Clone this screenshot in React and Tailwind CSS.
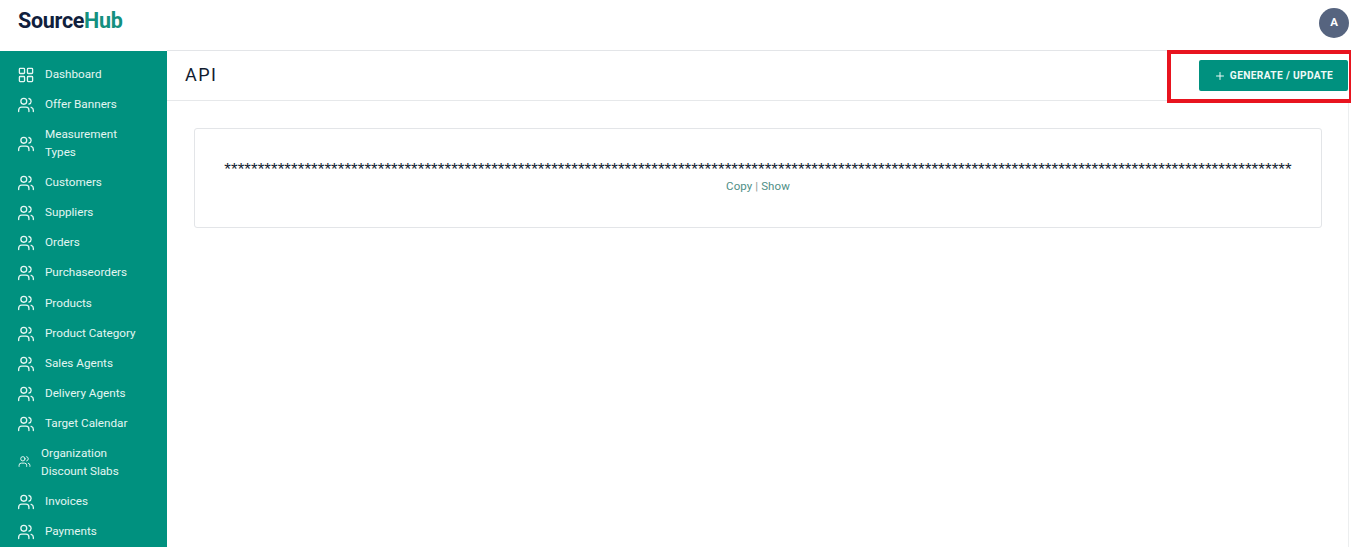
import React from "react";
import { LayoutGrid, Users, Plus } from "lucide-react";

const items = [
  ["Dashboard", "grid"],
  ["Offer Banners"],
  ["Measurement Types", "tall"],
  ["Customers"],
  ["Suppliers"],
  ["Orders"],
  ["Purchaseorders"],
  ["Products"],
  ["Product Category"],
  ["Sales Agents"],
  ["Delivery Agents"],
  ["Target Calendar"],
  ["Organization Discount Slabs", "small"],
  ["Invoices"],
  ["Payments"],
];

function NavRow({ label, kind }) {
  if (kind === "small") {
    return (
      <div className="flex h-[47.3px] items-center pb-[2px] pl-[18px] pr-4">
        <Users className="h-[13px] w-[13px] shrink-0 text-[#e6f7f3]" strokeWidth={1.8} />
        <span className="ml-[10px] w-[110px] text-[11.7px] leading-[18px] text-[#e3f6f2]">{label}</span>
      </div>
    );
  }
  const Icon = kind === "grid" ? LayoutGrid : Users;
  return (
    <div className={`flex items-center pl-[18px] pr-4 ${kind === "tall" ? "h-[47.3px]" : "h-[30.2px]"}`}>
      <Icon className="h-4 w-4 shrink-0 scale-110 text-[#e6f7f3]" strokeWidth={1.8} />
      <span className="ml-[11px] w-[100px] text-[11.7px] leading-[17.5px] text-[#e3f6f2]">{label}</span>
    </div>
  );
}

export default function App() {
  return (
    <div className="relative h-[547px] w-[1351px] overflow-hidden bg-white font-['Roboto',sans-serif]">
      <header className="flex h-[51px] items-start justify-between">
        <div className="pl-[18px] pt-[9px] text-[21.5px] font-bold leading-6 tracking-[-0.3px] text-[#10203c]">
          Source<span className="text-[#14907f]">Hub</span>
        </div>
        <div className="mr-[2px] mt-[8px] flex h-[30px] w-[30px] items-center justify-center rounded-full bg-[#56647f] text-[11.5px] font-bold text-white">
          A
        </div>
      </header>
      <div className="flex h-[496px]">
        <aside className="w-[167px] shrink-0 bg-[#00917f] pt-[8.8px]">
          {items.map(([label, kind]) => (
            <NavRow key={label} label={label} kind={kind} />
          ))}
        </aside>
        <main className="-mt-px min-w-0 flex-1 border-t border-[#e3e5e8]">
          <div className="flex h-[50px] items-center justify-between border-b border-[#e6e8ea] pl-[18px] pr-[3px]">
            <h1 className="-mt-[2px] text-[18px] leading-6 tracking-[1.4px] text-[#111c30]">API</h1>
            <button className="flex h-[31px] w-[149px] items-center justify-center gap-[4px] rounded-[2px] bg-[#00917f] text-[10.2px] font-bold tracking-[0.35px] text-[#eefaf7]">
              <Plus className="h-3 w-3" strokeWidth={2} />
              GENERATE / UPDATE
            </button>
          </div>
          <div className="ml-[27px] mt-[27px] h-[100px] w-[1128px] rounded-[3px] border border-[#e3e5e8] pt-[32px] text-center">
            <div className="whitespace-nowrap font-['Liberation_Sans',sans-serif] text-[17px] leading-[18px] tracking-[0.055px] text-[#111c30]">
              {"*".repeat(160)}
            </div>
            <div className="-mt-[2px] text-[11.5px] leading-[18px] tracking-[0.1px] text-[#4f8f86]">
              Copy <span className="text-[#8a9a97]">|</span> Show
            </div>
          </div>
        </main>
      </div>
      <div className="absolute right-0 top-[50px] h-[53px] w-[184px] border-[4.5px] border-r-[2px] border-[#e8141f]" />
      <div className="absolute right-[2px] top-[103px] h-[444px] w-px bg-[#eceeef]" />
    </div>
  );
}
